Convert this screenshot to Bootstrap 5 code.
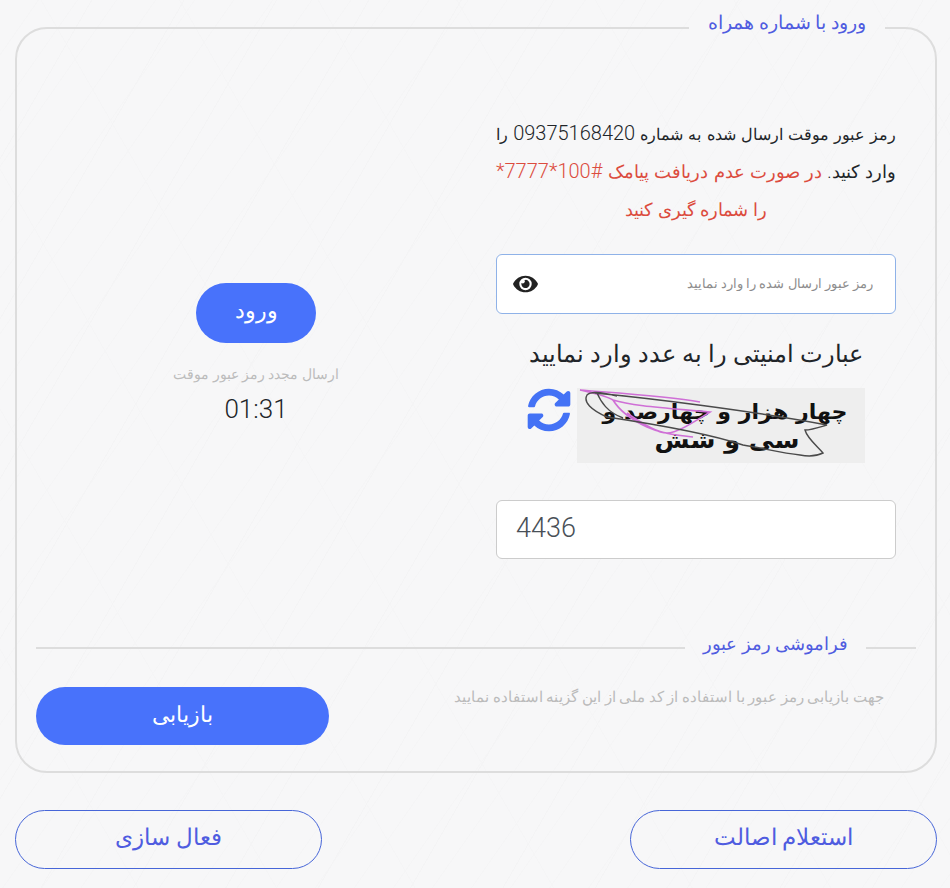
<!DOCTYPE html>
<html lang="fa" dir="rtl">
<head>
<meta charset="utf-8">
<title>ورود</title>
<link href="https://cdn.jsdelivr.net/npm/bootstrap@5.3.0/dist/css/bootstrap.min.css" rel="stylesheet">
<style>
html,body{height:888px;overflow:hidden}
body{font-family:Roboto,"Noto Sans","DejaVu Sans",sans-serif;font-weight:300;color:#212529;background-color:#f7f7f8;
background-image:repeating-linear-gradient(120deg,transparent 0 79px,#f4f4f5 79px 80px),repeating-linear-gradient(60deg,transparent 0 119px,#f5f5f6 119px 120px),repeating-linear-gradient(125deg,transparent 0 31px,#f5f5f6 31px 32px)}
.page-wrap{padding:10px 13px 0 15px}
.login-box{border:2px solid #ddd;border-radius:32px;margin:0;padding:0 19px 26px;height:763px;min-width:0}
.login-box>legend{float:none;width:auto;margin:0 31px 0 0;padding:0 19px 9px;font-size:18.7px;line-height:27px;color:#4f5ce0;font-weight:300}
.login-main{height:588px}
.form-side{width:440px;padding:70px 20px 0}
.action-side{width:440px;padding-top:237px}
.info-text{font-size:16.2px;line-height:38px;text-align:justify;text-align-last:center;margin:0 0 24px}
.info-text .warn-text{color:#dc4c3e;font-size:18px;line-height:1}
.info-text .end-words{font-size:18px;line-height:1}
.info-text b{font-size:20px;font-weight:300;line-height:1}
.otp-field{height:60px;background:#fff;border:1px solid #8fb2e8;border-radius:6px;padding:0 20px 0 16px;margin-bottom:26px}
.otp-field input{border:0;outline:0;background:transparent;flex:1;font-size:13.2px;font-weight:300;min-width:0}
.otp-field input::placeholder{color:#8d8d8d;opacity:1}
.captcha-title{font-size:24.4px;line-height:30px;font-weight:300;text-align:center;margin:-1px 0 19px}
.captcha-row{height:75px;margin-bottom:37px;padding-right:31px;gap:6px}
.captcha-pic{width:288px;height:75px;display:block;background:#eee}
.refresh-ico{width:44px;height:44px;margin-bottom:31px;fill:#4472f5}
.captcha-input.form-control{height:59px;font-size:27px;font-weight:300;color:#495057;padding:0 20px 3px 19px;border-color:#ccc;border-radius:6px;text-align:left}
.btn-blue{background:#4872fb;color:#fff;border:0;font-weight:300}
.btn-blue:hover{background:#4872fb;color:#fff}
.enter-btn{width:120px;height:60px;border-radius:30px;font-size:22px;padding:0 0 5px}
.resend-label{font-size:14px;line-height:21px;color:#bcbcbc;margin-top:21px}
.timer-text{font-size:26px;line-height:36px;margin-top:6px;font-weight:300}
.divider-row{height:27px}
.divider-row i{display:block;height:2px;background:#ddd}
.divider-row i.short{width:50px}
.divider-row span{font-size:17.6px;line-height:27px;color:#4f5ce0;padding:0 18px 6px}
.forgot-row{margin-top:26px}
.forgot-text{font-size:14.8px;color:#bbb;line-height:20px;padding:0 32px 0 0}
.recover-btn{width:293px;height:58px;border-radius:29px;font-size:22px;padding:0 0 3px}
.bottom-row{margin-top:37px}
.outline-pill{width:307px;height:59px;border-radius:30px;border:1px solid #4766d8;color:#4f5ce0;background:transparent;font-size:22.6px;font-weight:300;padding:0 0 4px}
.outline-pill:hover{color:#4f5ce0;border-color:#4766d8}
</style>
</head>
<body>
<div class="page-wrap">
  <fieldset class="login-box">
    <legend>ورود با شماره همراه</legend>
    <div class="login-main d-flex">
      <div class="form-side">
        <p class="info-text">رمز عبور موقت ارسال شده به شماره <b>09375168420</b> را <span class="end-words">وارد کنید.</span> <span class="warn-text">در صورت عدم دریافت پیامک <b>#100*7777*</b> را شماره گیری کنید</span></p>
        <div class="otp-field d-flex align-items-center">
          <input type="text" placeholder="رمز عبور ارسال شده را وارد نمایید">
          <svg width="25" height="22" viewBox="0 0 576 512" fill="#222" aria-hidden="true"><path d="M572.52 241.4C518.29 135.59 410.93 64 288 64S57.68 135.64 3.48 241.41a32.35 32.35 0 0 0 0 29.19C57.71 376.41 165.07 448 288 448s230.32-71.64 284.52-177.41a32.35 32.35 0 0 0 0-29.19zM288 400a144 144 0 1 1 144-144 143.93 143.93 0 0 1-144 144zm0-240a95.31 95.31 0 0 0-25.31 3.79 47.85 47.85 0 0 1-66.9 66.9A95.78 95.78 0 1 0 288 160z"/></svg>
        </div>
        <h2 class="captcha-title">عبارت امنیتی را به عدد وارد نمایید</h2>
        <div class="captcha-row d-flex align-items-center">
          <svg class="captcha-pic" viewBox="0 0 288 75" aria-label="captcha">
            <text x="148" y="31" text-anchor="middle" textLength="245" lengthAdjust="spacingAndGlyphs" font-family="DejaVu Sans" font-weight="700" font-size="21" fill="#111">چهار هزار و چهارصد و</text>
            <text x="150" y="60" text-anchor="middle" textLength="145" lengthAdjust="spacingAndGlyphs" font-family="DejaVu Sans" font-weight="700" font-size="23" fill="#111">سی و شش</text>
            <path d="M3 2C40 5 90 8 123 14M3 2C20 6 30 8 36 12 42 22 55 32 70 39 85 46 100 47 116 49M36 12C55 18 90 20 133 24 115 35 100 45 90 45 80 45 60 32 50 25" fill="none" stroke="#cf6fd6" stroke-width="1.6"/>
            <path d="M18 5C70 10 170 22 250 37 240 40 234 42 228 42 230 50 240 58 246 65 238 69 228 68 223 67 205 65 185 60 166 57 130 45 70 35 30 29 14 22 6 14 10 7 14 3 22 4 40 8M20 5C24 14 30 24 46 30" fill="none" stroke="#4a4a4a" stroke-width="1.4"/>
          </svg>
          <svg class="refresh-ico" viewBox="0 0 512 512" aria-hidden="true"><path d="M370.72 133.28C339.458 104.008 298.888 87.962 255.848 88c-77.458.068-144.328 53.178-162.791 126.85-1.344 5.363-6.122 9.15-11.651 9.15H24.103c-7.498 0-13.194-6.807-11.807-14.176C33.933 94.924 134.813 8 256 8c66.448 0 126.791 26.136 171.315 68.685L463.03 40.97C478.149 25.851 504 36.559 504 57.941V192c0 13.255-10.745 24-24 24H345.941c-21.382 0-32.09-25.851-16.971-40.971l41.75-41.749zM32 296h134.059c21.382 0 32.09 25.851 16.971 40.971l-41.75 41.75c31.262 29.273 71.835 45.319 114.876 45.28 77.418-.07 144.315-53.144 162.787-126.849 1.344-5.363 6.122-9.15 11.651-9.15h57.304c7.498 0 13.194 6.807 11.807 14.176C478.067 417.076 377.187 504 256 504c-66.448 0-126.791-26.136-171.315-68.685L48.97 471.03C33.851 486.149 8 475.441 8 454.059V320c0-13.255 10.745-24 24-24z"/></svg>
        </div>
        <input class="form-control captcha-input" type="text" value="4436" dir="ltr">
      </div>
      <div class="action-side text-center">
        <button class="btn btn-blue enter-btn" type="button">ورود</button>
        <div class="resend-label">ارسال مجدد رمز عبور موقت</div>
        <div class="timer-text">01:31</div>
      </div>
    </div>
    <div class="divider-row d-flex align-items-center">
      <i class="short"></i><span>فراموشی رمز عبور</span><i class="flex-grow-1"></i>
    </div>
    <div class="forgot-row d-flex justify-content-between align-items-start">
      <div class="forgot-text">جهت بازیابی رمز عبور با استفاده از کد ملی از این گزینه استفاده نمایید</div>
      <button class="btn btn-blue recover-btn" type="button">بازیابی</button>
    </div>
  </fieldset>
  <div class="bottom-row d-flex justify-content-between">
    <button class="btn outline-pill" type="button">استعلام اصالت</button>
    <button class="btn outline-pill" type="button">فعال سازی</button>
  </div>
</div>
<script src="https://cdn.jsdelivr.net/npm/bootstrap@5.3.0/dist/js/bootstrap.bundle.min.js"></script>
</body>
</html>
